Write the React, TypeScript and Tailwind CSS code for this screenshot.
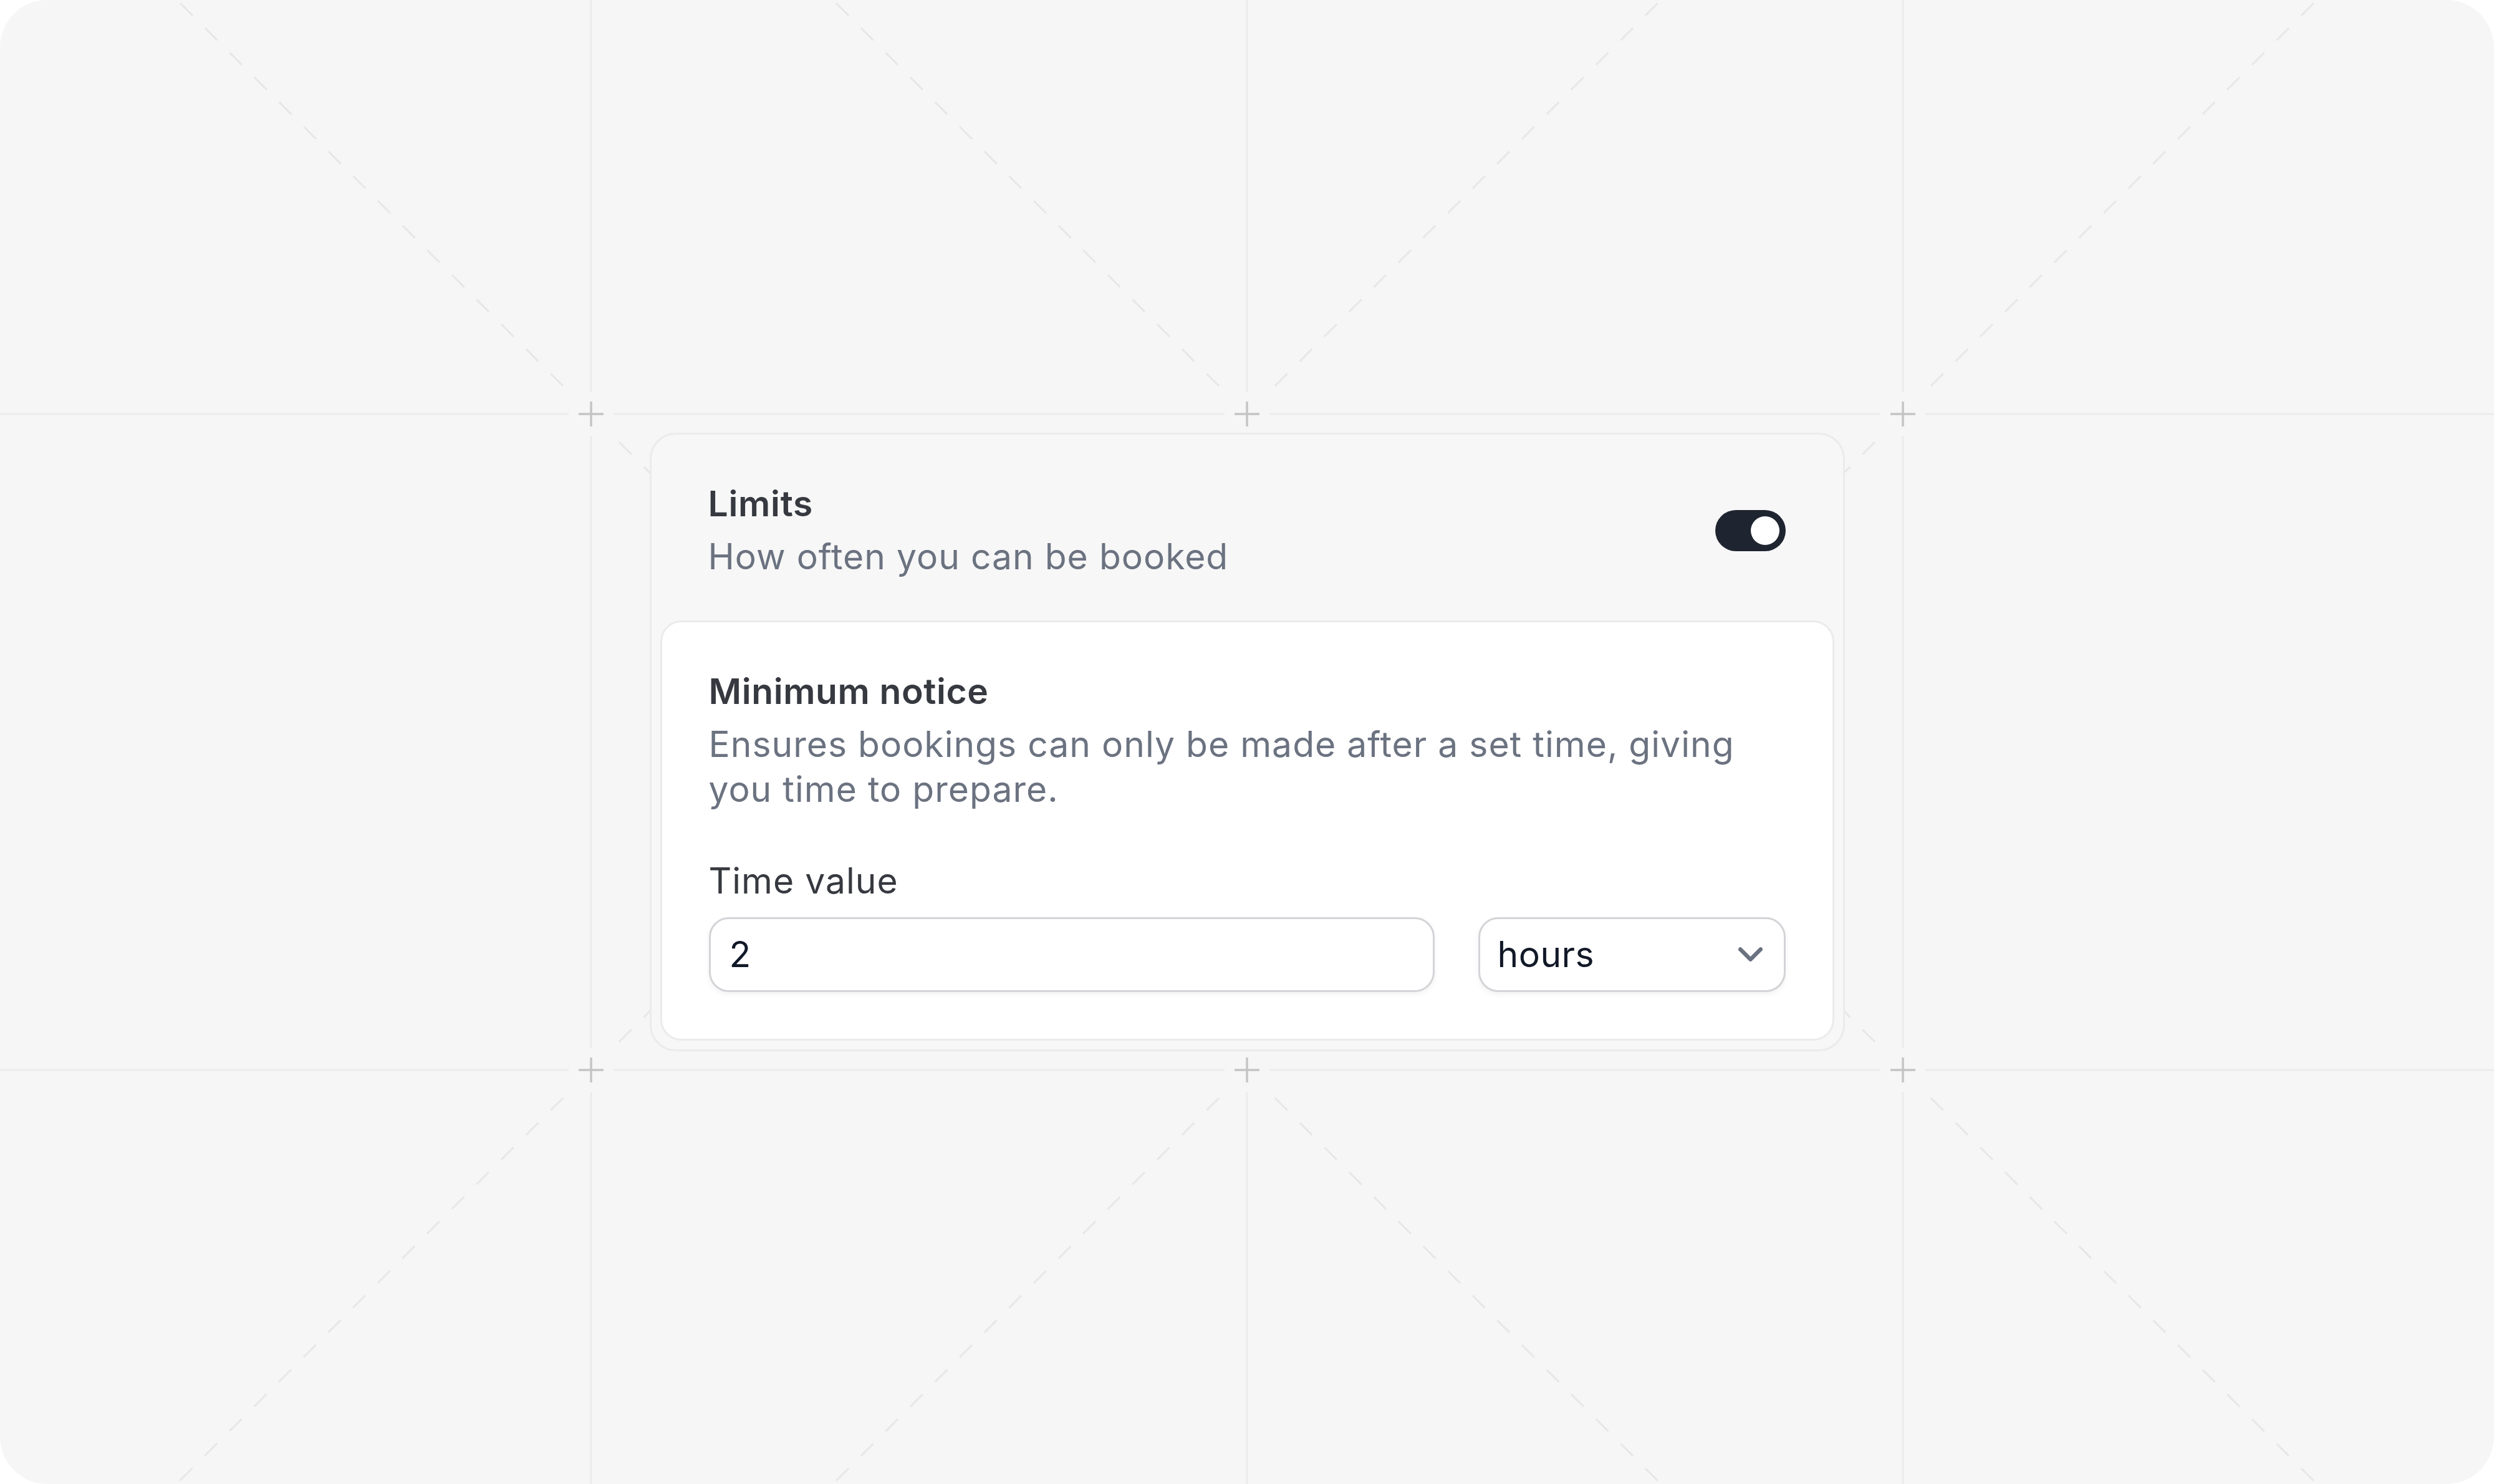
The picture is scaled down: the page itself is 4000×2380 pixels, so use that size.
import React from "react";

// background drawing: grid lines, crosses and dashed diagonals
const GRID = "#ebebeb";
const CROSS = "#c4c4c4";
const DASH = "#e7e7e7";

const COLS = [948, 2000, 3052];
const ROWS = [664, 1716];
const GAP = 36;

const hSegments = (y: number) => {
  const stops = [0, ...COLS.flatMap((x) => [x - GAP, x + GAP]), 4000];
  const out: number[][] = [];
  for (let i = 0; i < stops.length; i += 2) out.push([stops[i], y, stops[i + 1], y]);
  return out;
};

const vSegments = (x: number) => {
  const stops = [0, ...ROWS.flatMap((y) => [y - GAP, y + GAP]), 2380];
  const out: number[][] = [];
  for (let i = 0; i < stops.length; i += 2) out.push([x, stops[i], x, stops[i + 1]]);
  return out;
};

const gridLines = [...ROWS.flatMap(hSegments), ...COLS.flatMap(vSegments)];

const crosses = COLS.flatMap((x) => ROWS.map((y) => [x, y]));

// each one starts next to a cross and runs outward
const diagonals = [
  [903, 619, 284, 0],
  [993, 709, 1300, 1016],
  [1955, 619, 1336, 0],
  [2045, 619, 2664, 0],
  [3097, 619, 3716, 0],
  [3007, 709, 2700, 1016],
  [903, 1761, 283, 2380],
  [993, 1671, 1300, 1364],
  [1955, 1761, 1336, 2380],
  [2045, 1761, 2664, 2380],
  [3097, 1761, 3716, 2380],
  [3007, 1671, 2700, 1364],
];

function Backdrop() {
  return (
    <svg
      viewBox="0 0 4000 2380"
      className="col-start-1 row-start-1 block h-[2380px] w-[4000px]"
    >
      {diagonals.map(([x1, y1, x2, y2], i) => (
        <line
          key={`d${i}`}
          x1={x1}
          y1={y1}
          x2={x2}
          y2={y2}
          stroke={DASH}
          strokeWidth={3}
          strokeDasharray="28 28"
        />
      ))}
      {gridLines.map(([x1, y1, x2, y2], i) => (
        <line key={`g${i}`} x1={x1} y1={y1} x2={x2} y2={y2} stroke={GRID} strokeWidth={3} />
      ))}
      {crosses.map(([x, y], i) => (
        <g key={`c${i}`} stroke={CROSS} strokeWidth={3.5}>
          <line x1={x - 20} y1={y} x2={x + 20} y2={y} />
          <line x1={x} y1={y - 20} x2={x} y2={y + 20} />
        </g>
      ))}
    </svg>
  );
}

function Toggle() {
  return (
    <button
      type="button"
      className="flex h-[66px] w-[113px] shrink-0 items-center justify-end rounded-full bg-[#1f2530] p-[10px]"
    >
      <span className="block h-[46px] w-[46px] rounded-full bg-white" />
    </button>
  );
}

function Chevron() {
  return (
    <svg width="39" height="24" viewBox="0 0 39 24" fill="none">
      <path
        d="M3.25 3.5 L19.5 19.75 L35.75 3.5"
        stroke="#6b7280"
        strokeWidth={6.5}
        strokeLinecap="round"
        strokeLinejoin="round"
      />
    </svg>
  );
}

export default function App() {
  return (
    <div className="h-[2380px] w-[4000px] bg-white font-[Inter,sans-serif]">
      <div className="grid h-[2380px] w-[4000px] grid-cols-1 grid-rows-1 overflow-hidden rounded-[76px] bg-[#f6f6f6]">
        <Backdrop />
        <div className="col-start-1 row-start-1 flex items-center justify-center">
          <div className="w-[1917px] rounded-[42px] border-[3px] border-[#ebebeb] bg-[#f7f7f7]">
            <div className="flex items-center justify-between pb-[66px] pl-[91px] pr-[92px] pt-[75px]">
              <div>
                <h2 className="text-[57px] font-semibold leading-[72px] tracking-[0.7px] text-[#36393f]">
                  Limits
                </h2>
                <p className="mt-[13px] text-[57px] leading-[72px] tracking-[1px] text-[#6b7280]">
                  How often you can be booked
                </p>
              </div>
              <Toggle />
            </div>

            <div className="mx-[14px] mb-[14px] rounded-[34px] border-[3px] border-[#ebebeb] bg-white p-[75px]">
              <h3 className="text-[57px] font-semibold leading-[72px] tracking-[0.6px] text-[#36393f]">
                Minimum notice
              </h3>
              <p className="mt-[13px] text-[57px] leading-[72px] tracking-[1px] text-[#6b7280]">
                Ensures bookings can only be made after a set time, giving
                <br />
                you time to prepare.
              </p>

              <label className="mt-[75px] block text-[57px] leading-[72px] tracking-[1px] text-[#36393f]">
                Time value
              </label>
              <div className="mt-[22px] flex gap-[70px]">
                <div className="flex h-[120px] flex-1 items-center rounded-[32px] border-[3px] border-[#d4d4d8] bg-white pl-[30px] shadow-[0_4px_10px_rgba(0,0,0,0.05)]">
                  <span className="text-[57px] leading-[72px] text-[#111827]">2</span>
                </div>
                <div className="flex h-[120px] w-[493px] items-center justify-between rounded-[32px] border-[3px] border-[#d4d4d8] bg-white pl-[28px] pr-[34px] shadow-[0_4px_10px_rgba(0,0,0,0.05)]">
                  <span className="text-[57px] leading-[72px] tracking-[0.5px] text-[#111827]">hours</span>
                  <Chevron />
                </div>
              </div>
            </div>
          </div>
        </div>
      </div>
    </div>
  );
}
